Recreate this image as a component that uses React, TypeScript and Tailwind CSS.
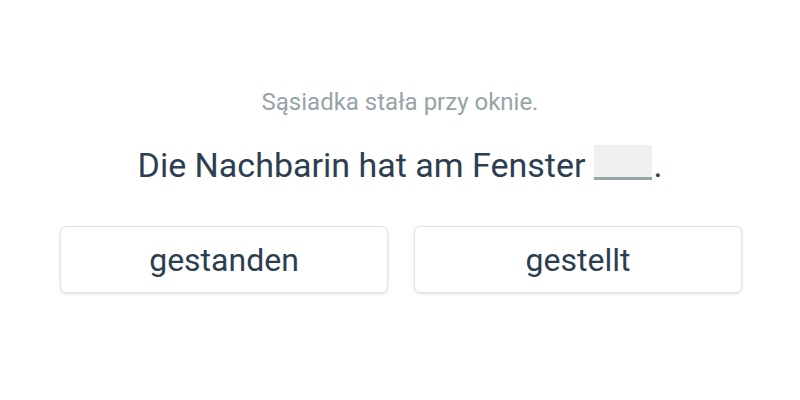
import React from 'react';

export default function App() {
  const options = ['gestanden', 'gestellt'];

  return (
    <div className="w-[800px] h-[400px] bg-white flex flex-col items-center pt-[86px]" style={{ fontFamily: 'Roboto, "Noto Sans", sans-serif' }}>
      <p className="text-[24px] leading-[32px] text-[#95a5a6]">Sąsiadka stała przy oknie.</p>

      <h1 className="mt-[25px] text-[34px] leading-[44px] text-[#2c3e50] flex items-end">
        Die Nachbarin hat am Fenster
        <span className="inline-block ml-[9px] mr-[1px] w-[58px] h-[35px] bg-[#eef0f2] border-b-[3px] border-[#95a5a6] mb-[7px]"></span>
        <span>.</span>
      </h1>

      <div className="mt-[39px] grid grid-cols-2 gap-[26px] w-[682px] ml-[2px]">
        {options.map(opt => (
          <button
            key={opt}
            type="button"
            className="h-[67px] rounded-[6px] border border-[#dfe3e6] bg-white shadow-[0_1px_3px_rgba(0,0,0,0.12)] text-[32px] text-[#2c3e50] flex items-center justify-center"
          >
            {opt}
          </button>
        ))}
      </div>
    </div>
  );
}
